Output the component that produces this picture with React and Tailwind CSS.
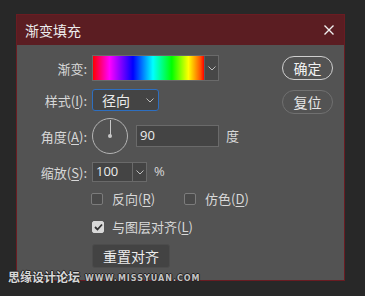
import React from 'react';

const cjk = { fontFamily: '"Noto Sans CJK SC", "Noto Sans", sans-serif' };

function Chevron({ className = '' }) {
  return (
    <svg width="8" height="5" viewBox="0 0 8 5" className={className}>
      <path d="M0.5 0.5 L4 4 L7.5 0.5" fill="none" stroke="#bdbdbd" strokeWidth="1" />
    </svg>
  );
}

function Label({ children }) {
  return <div className="w-[70px] shrink-0 text-right text-[13px] text-[#d8d8d8] leading-none">{children}</div>;
}

function Key({ k }) {
  return (
    <span>
      (<span className="underline underline-offset-2">{k}</span>):
    </span>
  );
}

function Box({ checked }) {
  return (
    <div
      className={`w-[12px] h-[12px] rounded-[2px] border flex items-center justify-center ${
        checked ? 'bg-[#d9d9d9] border-[#d9d9d9]' : 'bg-[#4a4a4a] border-[#7c7c7c]'
      }`}
    >
      {checked && (
        <svg width="9" height="8" viewBox="0 0 9 8">
          <path d="M1 4 L3.5 6.5 L8 1.5" fill="none" stroke="#333" strokeWidth="1.8" />
        </svg>
      )}
    </div>
  );
}

export default function App() {
  return (
    <div className="relative w-[365px] h-[296px] bg-[#282828] pt-[14px] pl-[16px]" style={cjk}>
      <div className="w-[329px] h-[267px] border border-[#6a1c22] flex flex-col">
        {/* title bar */}
        <div className="h-[30px] bg-[#5b1d22] flex items-center justify-between pl-[8px] pr-[10px]">
          <span className="text-[14px] text-[#ececec]">渐变填充</span>
          <svg width="10" height="10" viewBox="0 0 10 10">
            <path d="M0.5 0.5 L9.5 9.5 M9.5 0.5 L0.5 9.5" stroke="#f0f0f0" strokeWidth="1.4" />
          </svg>
        </div>

        {/* body */}
        <div className="flex-1 bg-[#535353] flex pt-[10px] pr-[11px]">
          <div className="flex-1 flex flex-col">
            <div className="flex items-center gap-[5px] h-[26px]">
              <Label>渐变:</Label>
              <div className="flex w-[127px] h-[26px] border border-[#6a6a6a]">
                <div className="flex-1 bg-[linear-gradient(to_right,#ff0000_0%,#ff00ff_15%,#0000ff_36%,#00ffff_54%,#00ff00_71%,#ffff00_86%,#ff5000_97%,#ff0000_100%)]" />
                <div className="w-[14px] bg-[#474747] border-l border-[#5c5c5c] flex items-center justify-center">
                  <Chevron />
                </div>
              </div>
            </div>

            <div className="flex items-center gap-[5px] h-[22px] mt-[8px]">
              <Label>
                样式<Key k="I" />
              </Label>
              <div className="w-[67px] h-[22px] rounded-[3px] border border-[#2e6fc0] bg-[#444] flex items-center justify-between pl-[9px] pr-[4px]">
                <span className="text-[14px] text-[#ececec]">径向</span>
                <Chevron />
              </div>
            </div>

            <div className="flex items-center gap-[5px] h-[36px] mt-[7px]">
              <Label>
                角度<Key k="A" />
              </Label>
              <div className="relative w-[36px] h-[36px] rounded-full border border-[#b4b4b4]">
                <div className="absolute left-[16.5px] top-[1px] w-[1px] h-[16px] bg-[#c8c8c8]" />
                <div className="absolute left-[15px] top-[15px] w-[4px] h-[4px] rounded-full bg-[#c8c8c8]" />
              </div>
              <div className="ml-[3px] w-[83px] h-[22px] bg-[#444] border border-[#6a6a6a] flex items-center pl-[3px]">
                <span className="text-[13px] text-[#ececec]" style={{ fontFamily: '"Open Sans", sans-serif' }}>90</span>
              </div>
              <span className="ml-[2px] text-[13px] text-[#d8d8d8]">度</span>
            </div>

            <div className="flex items-center gap-[5px] h-[20px] mt-[8px]">
              <Label>
                缩放<Key k="S" />
              </Label>
              <div className="flex w-[55px] h-[20px] bg-[#444] border border-[#6a6a6a]">
                <div className="flex-1 flex items-center pl-[3px] text-[13px] text-[#ececec]" style={{ fontFamily: '"Open Sans", sans-serif' }}>
                  100
                </div>
                <div className="w-[14px] border-l border-[#6a6a6a] flex items-center justify-center">
                  <Chevron />
                </div>
              </div>
              <span className="ml-[2px] text-[13px] text-[#d8d8d8]" style={{ fontFamily: '"Open Sans", sans-serif' }}>%</span>
            </div>

            <div className="flex items-center h-[14px] mt-[10px] pl-[74px]">
              <Box />
              <span className="ml-[9px] text-[13px] text-[#d8d8d8]">
                反向(<span className="underline underline-offset-2">R</span>)
              </span>
              <div className="ml-[29px]">
                <Box />
              </div>
              <span className="ml-[9px] text-[13px] text-[#d8d8d8]">
                仿色(<span className="underline underline-offset-2">D</span>)
              </span>
            </div>

            <div className="flex items-center h-[14px] mt-[14px] pl-[75px]">
              <Box checked />
              <span className="ml-[8px] text-[13px] text-[#d8d8d8]">
                与图层对齐(<span className="underline underline-offset-2">L</span>)
              </span>
            </div>

            <div className="mt-[10px] pl-[75px]">
              <div className="w-[78px] h-[24px] rounded-[3px] bg-[#434343] border border-[#4c4c4c] flex items-center justify-center text-[14px] text-[#ececec]">
                重置对齐
              </div>
            </div>
          </div>

          <div className="flex flex-col gap-[10px] pt-[1px]">
            <div className="w-[51px] h-[24px] rounded-full border-[1.5px] border-[#cfcfcf] flex items-center justify-center text-[14px] text-[#f2f2f2]">
              确定
            </div>
            <div className="w-[51px] h-[24px] rounded-full border-[1.5px] border-[#707070] flex items-center justify-center text-[14px] text-[#e6e6e6]">
              复位
            </div>
          </div>
        </div>
      </div>

      {/* watermark */}
      <div className="absolute left-[8px] top-[271px] flex items-end gap-[5px]">
        <span
          className="text-[12px] font-bold text-[#d8d8d8] leading-none"
          style={{ textShadow: '1px 0 #222, -1px 0 #222, 0 1px #222, 0 -1px #222' }}
        >
          思缘设计论坛
        </span>
        <span
          className="text-[8px] font-bold text-[#c4c4c4] leading-none tracking-[1px]"
          style={{ fontFamily: '"DejaVu Sans", sans-serif', textShadow: '1px 0 #222, -1px 0 #222, 0 1px #222, 0 -1px #222' }}
        >
          WWW.MISSYUAN.COM
        </span>
      </div>
    </div>
  );
}
